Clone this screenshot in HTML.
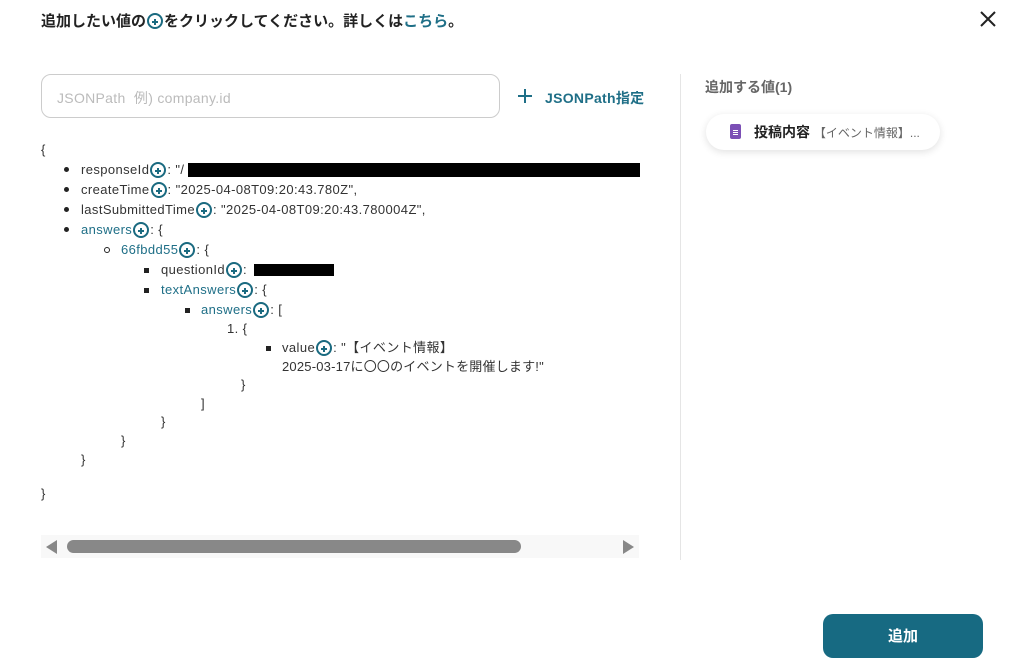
<!DOCTYPE html>
<html><head><meta charset="utf-8"><style>
*{margin:0;padding:0;box-sizing:border-box}
body{width:1036px;height:667px;background:#fff;font-family:"Liberation Sans","Noto Sans CJK JP",sans-serif;color:#333;position:relative;overflow:hidden}
.a{position:absolute;white-space:nowrap}
.t{font-size:13px;line-height:16px;color:#333;letter-spacing:0.4px}
.k{color:#1f6f87}
.p{display:inline-block;width:16px;height:16px;border:2px solid #1a6a80;border-radius:50%;vertical-align:-4px;position:relative;margin:0 1px}
.p:before{content:"";position:absolute;left:3px;top:6px;width:6px;height:2px;background:#1a6a80}
.p:after{content:"";position:absolute;left:5px;top:4px;width:2px;height:6px;background:#1a6a80}
.b{position:absolute;width:5px;height:5px;background:#222;border-radius:50%}
.s{position:absolute;width:5px;height:5px;background:#222}
.o{position:absolute;width:6px;height:6px;border:1.3px solid #222;border-radius:50%}
</style></head><body>
<div class="a" style="left:41px;top:11px;font-size:15px;font-weight:bold;color:#222;line-height:22px">追加したい値の<span class="p" style="vertical-align:-3px"></span>をクリックしてください。詳しくは<span style="color:#1f6f87">こちら</span>。</div>
<svg class="a" style="left:980px;top:11px" width="16" height="16" viewBox="0 0 16 16"><path d="M1 1L15 15M15 1L1 15" stroke="#222" stroke-width="2"/></svg>
<div class="a" style="left:41px;top:74px;width:459px;height:44px;border:1px solid #ccc;border-radius:10px"></div>
<div class="a" style="left:57px;top:88px;font-size:14px;color:#bbb;letter-spacing:0.3px">JSONPath&nbsp; 例) company.id</div>
<svg class="a" style="left:518px;top:89px" width="14" height="14" viewBox="0 0 14 14"><path d="M7 0V14M0 7H14" stroke="#1f6f87" stroke-width="2"/></svg>
<div class="a" style="left:545px;top:88px;font-size:14px;font-weight:bold;color:#1f6f87;letter-spacing:0.3px">JSONPath指定</div>
<div class="a" style="left:680px;top:74px;width:1px;height:486px;background:#e5e5e5"></div>
<div class="a" style="left:705px;top:77px;font-size:14px;font-weight:bold;color:#666">追加する値(1)</div>
<div class="a" style="left:706px;top:114px;width:234px;height:36px;border-radius:18px;background:#fff;box-shadow:0 2px 8px rgba(0,0,0,.12)"></div>
<div class="a" style="left:730px;top:124px;width:11px;height:15px;background:#7b4fb5;border-radius:2px"></div>
<div class="a" style="left:733px;top:130px;width:5px;height:1px;background:#fff;box-shadow:0 2px #fff,0 4px #fff"></div>
<div class="a" style="left:754px;top:122px;font-size:14px;font-weight:bold;color:#222">投稿内容 <span style="font-size:12px;font-weight:normal;color:#666">【イベント情報】...</span></div>

<div class="a t" style="left:41px;top:142px">{</div>
<div class="b" style="left:64px;top:167px"></div><div class="a t" style="left:81px;top:162px">responseId<span class="p"></span>: "/</div>
<div class="a" style="left:188px;top:163px;width:452px;height:14px;background:#000"></div>
<div class="b" style="left:64px;top:187px"></div><div class="a t" style="left:81px;top:182px">createTime<span class="p"></span>: "2025-04-08T09:20:43.780Z",</div>
<div class="b" style="left:64px;top:207px"></div><div class="a t" style="left:81px;top:202px">lastSubmittedTime<span class="p"></span>: "2025-04-08T09:20:43.780004Z",</div>
<div class="b" style="left:64px;top:227px"></div><div class="a t" style="left:81px;top:222px"><span class="k">answers</span><span class="p"></span>: {</div>
<div class="o" style="left:104px;top:247px"></div><div class="a t" style="left:121px;top:242px"><span class="k">66fbdd55</span><span class="p"></span>: {</div>
<div class="s" style="left:144px;top:268px"></div><div class="a t" style="left:161px;top:262px">questionId<span class="p"></span>:</div>
<div class="a" style="left:254px;top:264px;width:80px;height:12px;background:#000"></div>
<div class="s" style="left:144px;top:288px"></div><div class="a t" style="left:161px;top:282px"><span class="k">textAnswers</span><span class="p"></span>: {</div>
<div class="s" style="left:185px;top:308px"></div><div class="a t" style="left:201px;top:302px"><span class="k">answers</span><span class="p"></span>: [</div>
<div class="a t" style="left:227px;top:321px">1. {</div>
<div class="s" style="left:266px;top:346px"></div><div class="a t" style="left:282px;top:340px">value<span class="p"></span>: "【イベント情報】</div>
<div class="a t" style="left:282px;top:359px;letter-spacing:0.2px">2025-03-17に〇〇のイベントを開催します!"</div>
<div class="a t" style="left:241px;top:377px">}</div>
<div class="a t" style="left:201px;top:396px">]</div>
<div class="a t" style="left:161px;top:414px">}</div>
<div class="a t" style="left:121px;top:433px">}</div>
<div class="a t" style="left:81px;top:452px">}</div>
<div class="a t" style="left:41px;top:486px">}</div>

<div class="a" style="left:41px;top:535px;width:598px;height:23px;background:#f8f8f8"></div>
<div class="a" style="left:46px;top:540px;width:0;height:0;border-top:7px solid transparent;border-bottom:7px solid transparent;border-right:11px solid #888"></div>
<div class="a" style="left:623px;top:540px;width:0;height:0;border-top:7px solid transparent;border-bottom:7px solid transparent;border-left:11px solid #888"></div>
<div class="a" style="left:67px;top:540px;width:454px;height:13px;background:#888;border-radius:7px"></div>

<div class="a" style="left:823px;top:614px;width:160px;height:44px;background:#176a82;border-radius:10px;color:#fff;font-size:15px;font-weight:bold;text-align:center;line-height:46px">追加</div>
</body></html>
